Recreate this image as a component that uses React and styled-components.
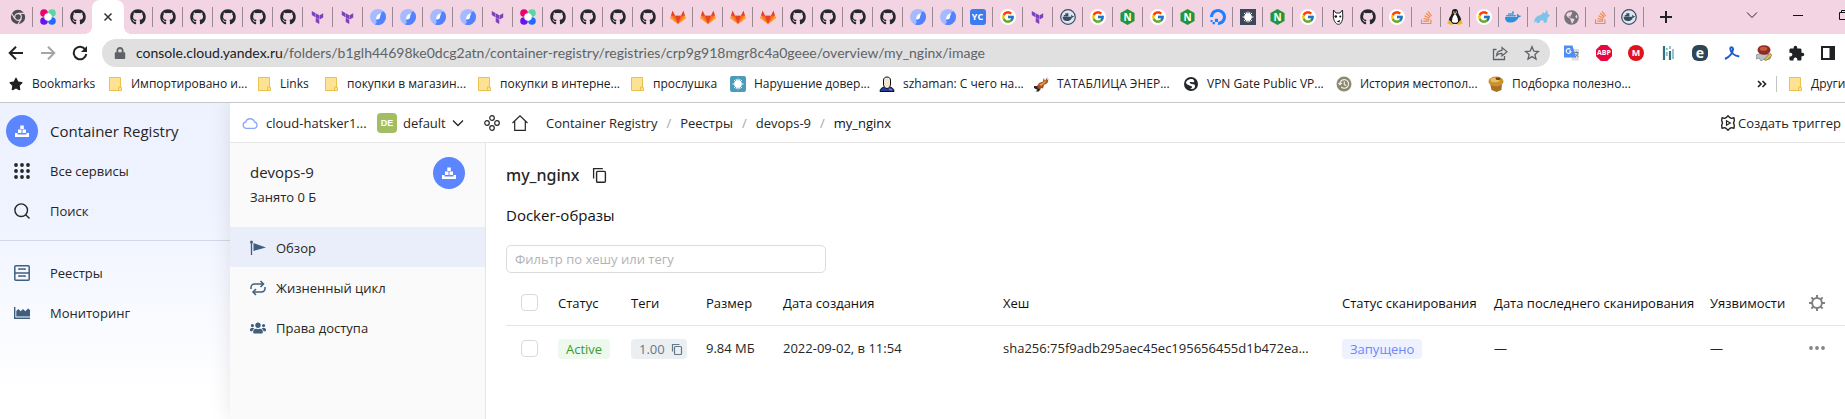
import React from "react";
import styled, { createGlobalStyle, css } from "styled-components";
import {
  FaGithub,
  FaDocker,
  FaStackOverflow,
  FaLock,
  FaStar,
  FaGlobeAmericas,
  FaUsers,
} from "react-icons/fa";
import { MdExtension } from "react-icons/md";
import { SiTerraform, SiDigitalocean } from "react-icons/si";
import { FcGoogle } from "react-icons/fc";

const GlobalStyle = createGlobalStyle`
  *, *::before, *::after { box-sizing: border-box; }
  body {
    margin: 0;
    overflow: hidden;
    background: #fff;
    color: #262626;
    font-family: "Open Sans", "Noto Sans", sans-serif;
    font-size: 13px;
    line-height: 20px;
  }
  button, input { font: inherit; color: inherit; }
  a { color: inherit; text-decoration: none; }
  svg { flex: none; }
`;

const Page = styled.div`
  display: flex;
  flex-direction: column;
  min-height: 100vh;
`;

const bareButton = css`
  display: flex;
  align-items: center;
  justify-content: center;
  flex: none;
  padding: 0;
  border: 0;
  background: none;
`;

/* ---------- browser frame ---------- */

const BrowserFrame = styled.header`
  border-bottom: 1px solid #c8c8c8;
  overflow: hidden;
`;

const TabStrip = styled.div`
  display: flex;
  align-items: stretch;
  height: 34px;
  padding-left: 3px;
  background: #f3d4e3;
`;

const Tab = styled.button`
  ${bareButton}
  width: ${(p) => (p.$narrow ? 29 : 30)}px;
  border-right: 1px solid transparent;
  background: ${(p) =>
    p.$divider ? "linear-gradient(#9c8892, #9c8892) right center / 1px 20px no-repeat border-box" : "none"};
`;

const ActiveTab = styled.button`
  ${bareButton}
  position: relative;
  width: 32px;
  margin: 0 -1px;
  border-radius: 8px 8px 0 0;
  background: #fff;
  &::before,
  &::after {
    content: "";
    position: absolute;
    bottom: 0;
    width: 8px;
    height: 8px;
  }
  &::before {
    right: 100%;
    background: radial-gradient(circle at 0 0, transparent 8px, #fff 8px);
  }
  &::after {
    left: 100%;
    background: radial-gradient(circle at 100% 0, transparent 8px, #fff 8px);
  }
`;

const NewTab = styled.button`
  ${bareButton}
  width: 28px;
  margin-left: 8px;
`;

const WindowControls = styled.div`
  display: flex;
  flex: none;
  width: 116px;
  height: 30px;
  margin-left: auto;
`;

const WindowButton = styled.button`
  ${bareButton}
  width: 46px;
`;

const Badge = styled.span`
  display: flex;
  align-items: center;
  justify-content: center;
  width: 16px;
  height: 16px;
  border-radius: ${(p) => p.$radius || 0}px;
  clip-path: ${(p) => p.$clip || "none"};
  background: ${(p) => p.$bg};
  color: #fff;
  font-size: ${(p) => p.$size || 8}px;
  font-weight: 700;
  line-height: 16px;
`;

const Toolbar = styled.div`
  display: flex;
  align-items: center;
  height: 38px;
  padding-right: 1px;
`;

const ToolButton = styled.button`
  ${bareButton}
  width: 32px;
  height: 28px;
`;

const AddressBar = styled.div`
  display: flex;
  align-items: center;
  flex: 1;
  min-width: 0;
  height: 28px;
  margin: 0 6px;
  padding: 0 2px 0 12px;
  border-radius: 14px;
  background: #e0e0e0;
`;

const Address = styled.div`
  flex: 1;
  min-width: 0;
  margin-left: 10px;
  overflow: hidden;
  white-space: nowrap;
  font-family: Lato, "Open Sans", sans-serif;
  font-size: 14px;
  color: #606367;
`;

const Host = styled.span`
  color: #202124;
`;

const BookmarkBar = styled.nav`
  display: flex;
  align-items: center;
  height: 30px;
  padding: 0 0 6px 8px;
  color: #202124;
  font-size: 12px;
`;

const Bookmark = styled.a`
  display: flex;
  align-items: center;
  flex: none;
  gap: 8px;
  width: ${(p) => p.$width}px;
  white-space: nowrap;
`;

const BookmarkIcon = styled.span`
  display: flex;
  justify-content: center;
  width: 16px;
`;

const MoreBookmarks = styled.div`
  display: flex;
  align-items: center;
  flex: none;
  width: 89px;
  margin-left: auto;
  overflow: hidden;
`;

const BarDivider = styled.span`
  flex: none;
  width: 1px;
  height: 16px;
  margin: 0 10px 0 8px;
  background: #c4c4c4;
`;

/* ---------- console ---------- */

const Console = styled.div`
  display: flex;
  flex: 1;
`;

const ServiceNav = styled.nav`
  flex: none;
  width: 230px;
  padding-top: 8px;
  background: linear-gradient(#eef2ff 0, #eff3ff 100px, #fff 290px);
`;

const ServiceLink = styled.a`
  display: flex;
  align-items: center;
  height: 40px;
  padding-left: 6px;
  gap: 12px;
  font-size: ${(p) => (p.$title ? 15 : 13)}px;
`;

const ServiceIcon = styled.span`
  display: flex;
  justify-content: center;
  width: 32px;
`;

const ServiceDivider = styled.hr`
  margin: 9px 0 12px;
  border: 0;
  border-top: 1px solid #d3d8e6;
`;

const Workspace = styled.div`
  position: relative;
  display: flex;
  flex-direction: column;
  flex: 1;
  min-width: 0;
  background: #fff;
  box-shadow: 0 0 20px rgba(0, 0, 0, 0.1);
  clip-path: inset(0 0 0 -40px);
`;

const TopBar = styled.div`
  display: flex;
  align-items: center;
  height: 40px;
  padding: 0 4px 0 12px;
  border-bottom: 1px solid #e5e5e5;
  white-space: nowrap;
`;

const CloudPicker = styled.button`
  ${bareButton}
  justify-content: flex-start;
  gap: 8px;
  width: 135px;
`;

const FolderPicker = styled.button`
  ${bareButton}
  justify-content: flex-start;
  gap: 6px;
  width: 101px;
`;

const FolderBadge = styled.span`
  width: 20px;
  height: 20px;
  border-radius: 4px;
  background: #a2be62;
  color: #fff;
  font-family: "Liberation Sans", sans-serif;
  font-size: 9px;
  font-weight: 700;
  line-height: 20px;
  text-align: center;
`;

const IconButton = styled.button`
  ${bareButton}
  width: 28px;
  height: 28px;
`;

const Crumbs = styled.ol`
  display: flex;
  margin: 0 0 0 12px;
  padding: 0;
  list-style: none;
`;

const Crumb = styled.li`
  color: ${(p) => (p.$current ? "#111" : "inherit")};
  &:not(:first-child)::before {
    content: "/";
    margin: 0 9px;
    color: #a5a5a5;
  }
`;

const TriggerButton = styled.button`
  ${bareButton}
  gap: 2px;
  margin-left: auto;
`;

const Body = styled.div`
  display: flex;
  flex: 1;
`;

const RegistryNav = styled.nav`
  flex: none;
  width: 256px;
  padding-top: 14px;
  border-right: 1px solid #e5e5e5;
  background: #fafafa;
`;

const RegistryHead = styled.div`
  display: flex;
  justify-content: space-between;
  align-items: flex-start;
  height: 70px;
  padding: 0 20px;
`;

const RegistryName = styled.h2`
  margin: 5px 0;
  font-size: 15px;
  font-weight: 400;
  line-height: 20px;
`;

const RegistryUsage = styled.p`
  margin: 0;
`;

const RegistryLink = styled.a`
  display: flex;
  align-items: center;
  gap: 10px;
  height: 40px;
  padding: 2px 0 0 20px;
  background: ${(p) => (p.$active ? "#eaeefb" : "none")};
`;

const Content = styled.main`
  flex: 1;
  min-width: 0;
  padding: 18px 0 0 20px;
`;

const TitleRow = styled.div`
  display: flex;
  align-items: center;
  gap: 6px;
`;

const Title = styled.h1`
  margin: 0;
  font-family: "Noto Sans", sans-serif;
  font-size: 16px;
  font-weight: 500;
  line-height: 24px;
`;

const Subtitle = styled.h2`
  margin: 16px 0 20px;
  font-size: 15px;
  font-weight: 400;
  line-height: 20px;
  color: #111;
`;

const Filter = styled.input`
  display: block;
  width: 320px;
  height: 28px;
  padding: 0 8px;
  border: 1px solid #dcdcdc;
  border-radius: 5px;
  background: #fff;
  &::placeholder { color: #b3b3b3; }
`;

const Table = styled.table`
  width: 100%;
  margin-top: 8px;
  border-collapse: collapse;
  table-layout: fixed;
`;

const Column = styled.col`
  width: ${(p) => (p.$width ? `${p.$width}px` : "auto")};
`;

const cell = css`
  padding: 0 0 0 10px;
  text-align: left;
  vertical-align: middle;
  white-space: nowrap;
`;

const HeadCell = styled.th`
  ${cell}
  height: 44px;
  border-bottom: 1px solid #e5e5e5;
  color: #111;
  font-weight: 400;
`;

const Cell = styled.td`
  ${cell}
  height: 46px;
`;

const Checkbox = styled.input`
  appearance: none;
  display: block;
  width: 17px;
  height: 17px;
  margin: 0 0 0 5px;
  border: 1px solid #d9d9d9;
  border-radius: 4px;
  background: #fff;
`;

const tones = {
  success: "background: #edf9ed; color: #3a9b32;",
  neutral: "background: #ebeff2; color: #64788a;",
  info: "background: #eef2ff; color: #6b87fa;",
};

const Label = styled.span`
  display: inline-flex;
  align-items: center;
  gap: 6px;
  height: 20px;
  padding: 0 ${(p) => (p.$copy ? 4 : 8)}px 0 8px;
  border-radius: 4px;
  vertical-align: middle;
  ${(p) => tones[p.$tone]}
`;

/* ---------- drawings ---------- */

const Svg = ({ size = 16, box = 16, children, ...rest }) => (
  <svg width={size} height={size} viewBox={`0 0 ${box} ${box}`} fill="none" aria-hidden="true" {...rest}>
    {children}
  </svg>
);

const Chrome = () => (
  <Svg>
    <circle cx="8" cy="8" r="7.2" fill="#4a4d51" />
    <circle cx="8" cy="8" r="3.3" fill="#4a4d51" stroke="#f3d4e3" strokeWidth="1.2" />
    <path d="M8 4.3h6.8M4.8 9.8 1.5 4.2M11.2 9.8 8 15.2" stroke="#f3d4e3" strokeWidth="1.2" />
  </Svg>
);

const Dots = () => (
  <Svg>
    <circle cx="4" cy="4" r="3.8" fill="#e8006f" />
    <circle cx="12" cy="4" r="3.8" fill="#5ad6a5" />
    <circle cx="4" cy="12" r="3.8" fill="#6414f0" />
    <circle cx="12" cy="12" r="3.8" fill="#1f6bff" />
    <circle cx="8" cy="8" r="3.8" fill="#fff" />
  </Svg>
);

const Planet = () => (
  <Svg>
    <circle cx="8" cy="8" r="8" fill="#a6bbff" />
    <path d="M13.500 2.200A8 8 0 0 1 4.500 15.200C8 14.500 6 12 6 10.500 6.500 6 10 4 13.500 2.200z" fill="#5282ff" />
    <path d="M11.500 4C8.500 4.500 6.200 6.500 6 10.300c1.600.6 3.400 0 3.900-1.500.4-1.600.3-3.200 1.600-4.800z" fill="#fff" />
  </Svg>
);

const Gitlab = () => (
  <Svg>
    <path d="M8 15 .3 9.300 2.500 1.800 5 6.700h6l2.500-4.900 2.200 7.500z" fill="#fc6d26" />
    <path d="M8 15 5 6.700h6z" fill="#e24329" />
    <path d="M2.500 1.800 5 6.700H1.200zM13.500 1.800 11 6.700h3.800z" fill="#e24329" />
    <path d="M.3 9.300 1.200 6.700 8 15zM15.700 9.300l-.9-2.600L8 15z" fill="#fca326" />
  </Svg>
);

const Google = () => (
  <Svg>
    <circle cx="8" cy="8" r="8" fill="#fff" />
    <FcGoogle x="1" y="1" size={14} />
  </Svg>
);

const Tux = () => (
  <Svg>
    <path d="M8 0c2.300 0 3.200 1.500 3.100 3.500 0 2.200 2.900 4 3.100 8L12 15H4l-2.200-3.500C2 8 4.900 6 4.900 3.500 4.800 1.500 5.700 0 8 0z" fill="#1c1c1c" />
    <path d="M8 5c1.500 1 3.200 4.500 3 7.500-1 1.800-5 1.800-6 0C4.800 9.500 6.500 6 8 5z" fill="#fff" />
    <path d="M6.300 4.300 8 3.500l1.700.8L8 5.800zM0 14.200 2.500 11l3.500 4-1.500 1zM16 14.200 13.500 11 10 15l1.500 1z" fill="#f2b521" />
    <path d="M6.200 2.500h1.200v1H6.200zM8.700 2.500h1.200v1H8.700z" fill="#fff" />
  </Svg>
);

const DockerRound = () => (
  <Svg>
    <circle cx="8" cy="8" r="7.300" fill="#dfe5ee" stroke="#384d61" strokeWidth="1.200" />
    <path d="M2.600 7.800h8.600c.2-1 .1-1.500-.2-2 .9.200 1.300.7 1.500 1.300.6-.1 1 0 1.400.3-.5.8-1 1-1.900 1-1 2.600-2.800 3.700-5.300 3.700-2.500 0-4-1.400-4.100-4.300z" fill="#384d61" />
    <path d="M3.800 6h4.600v1.500H3.800zM5.300 4.300h3.100V6H5.300z" fill="#384d61" />
  </Svg>
);

const Burst = ({ bg, color, radius }) => (
  <Svg>
    <rect width="16" height="16" rx={radius} fill={bg} />
    <circle cx="8" cy="8" r="3.800" fill={color} />
    <path d="M8 2.500v11M2.500 8h11M4 4l8 8M12 4l-8 8M6 3l4 10M10 3 6 13" stroke={color} strokeWidth=".9" />
  </Svg>
);

const Wolf = () => (
  <Svg>
    <path d="M3.500 1 6 4h4l2.500-3 .3 7c0 2.500-1.400 6.700-3.300 7.200C6.500 16 4 13 3.300 8z" fill="#fff" stroke="#222" />
    <circle cx="5.800" cy="7.500" r="1.300" fill="#111" />
    <circle cx="10.300" cy="7.500" r="1" fill="#111" />
    <path d="M6.500 12.500 10 11l-.5 2.500z" fill="#111" />
  </Svg>
);

const Rhino = () => (
  <Svg>
    <path d="M0 14c.3-4 2-7 5.500-7.500L8 5l1-2 1.500 1.500L13 .8l.8 4L16 6.500l-2.300 2.300-1.200 5H9.800l-.5-2.600-3 .3-.8 2.500H2.800L2.300 12z" fill="#7cc3ea" />
  </Svg>
);

const Close = () => (
  <Svg size={10} box={10}><path d="m1.500 1.500 7 7m0-7-7 7" stroke="#333" strokeWidth="1.500" /></Svg>
);
const Plus = () => (
  <Svg size={12} box={12}><path d="M6 0v12M0 6h12" stroke="#222" strokeWidth="2" /></Svg>
);
const Chevron = ({ width = 1 }) => (
  <Svg size={12} box={12}><path d="m1 3.500 5 5 5-5" stroke="#262626" strokeWidth={width} /></Svg>
);
const Minimise = () => (
  <Svg size={10} box={10}><path d="M0 5.500h10" stroke="#111" /></Svg>
);
const Restore = () => (
  <Svg size={10} box={10}><path d="M.5 2.500h7v7h-7zM2.500 2V.5h7v7H8" stroke="#111" /></Svg>
);
const Arrow = ({ forward }) => (
  <Svg transform={forward ? "scale(-1 1)" : undefined}>
    <path d="M15 8H2M8 1.700 1.700 8 8 14.300" stroke={forward ? "#a5a5a5" : "#222"} strokeWidth="2" />
  </Svg>
);
const Reload = () => (
  <Svg>
    <path d="M13.300 4.500A6.300 6.300 0 1 0 14.300 9" stroke="#222" strokeWidth="2" />
    <path d="M15 1v6H9z" fill="#222" />
  </Svg>
);
const Share = () => (
  <Svg>
    <path d="M4.500 4.500h-3v10h11V11" stroke="#5f6368" strokeWidth="1.300" />
    <path d="M4.500 10.500c.3-3.200 2-5 5.500-5.200V2.600l5 4.200-5 4.200V8.300c-2.500 0-4 .600-5.500 2.200z" stroke="#5f6368" strokeWidth="1.200" />
  </Svg>
);
const StarOutline = () => (
  <Svg>
    <path d="m8 1.800 1.800 4.300 4.600.4-3.500 3 1.100 4.600L8 11.600l-4 2.500 1.100-4.600-3.500-3 4.600-.4z" stroke="#5f6368" strokeWidth="1.300" />
  </Svg>
);
const Translate = () => (
  <Svg>
    <path d="M6 4h9v11.500H8z" fill="#dadce0" />
    <path d="M0 .5h8.500L12 12.500H0z" fill="#4f8df5" />
    <path d="M7 6a2.400 2.400 0 1 1-.7-1.700M7 6H5" stroke="#fff" strokeWidth="1.100" />
    <path d="M10.500 7.500h4M12.500 6.500v1M14 8c-.5 2-1.500 3-3 4M11.500 9l2.800 3" stroke="#5f7d95" />
  </Svg>
);
const Bars = () => (
  <Svg>
    <path d="M4 1v14M10 6v9" stroke="#2f7383" strokeWidth="2.200" />
    <path d="M6.800 3v2m0 2v4M13 4v10M10 1v3" stroke="#8fb9c2" strokeWidth="1.800" />
  </Svg>
);
const Ribbon = () => (
  <Svg>
    <path d="M1 14c4-2 7.500-5 8-9.500C9.200 2 6 1.500 6.300 4c.4 3.500 4 6.500 9 7.500" stroke="#1d5bd0" strokeWidth="2" />
  </Svg>
);
const Stamp = () => (
  <Svg>
    <path d="m0 10 3-1 2-1 3 1 7 0-1 5-4 1-2-1-3 2-2-3-3 1z" fill="#b9c2cc" stroke="#68727c" strokeWidth=".6" />
    <ellipse cx="8" cy="5" rx="6.500" ry="4.800" fill="#8f2c1f" />
    <ellipse cx="7.500" cy="3.800" rx="3.800" ry="2" fill="#c25a44" />
    <path d="m8 14.500 6-6 2 2-6 5z" fill="#efc04a" stroke="#7d5a17" strokeWidth=".6" />
  </Svg>
);
const SidePanel = () => (
  <Svg><path d="M2 2h12v12H2z" stroke="#202124" strokeWidth="2" /><path d="M9.500 2H15v12H9.500z" fill="#202124" /></Svg>
);
const Folder = () => (
  <Svg>
    <path d="M2.500 1.500h11v10h1v3h-12z" fill="#fde293" stroke="#e9c14b" />
    <path d="M11.500 14v-3h2.500" stroke="#e9c14b" />
  </Svg>
);
const Soldier = () => (
  <Svg>
    <path d="M1 15.500c0-3 2-4 5-4.500h4c3 .5 5 1.500 5 4.500z" fill="#1d3fae" stroke="#111" />
    <path d="M4.500 4c0-4 7-4 7 0v4c0 3-2 4.500-3.500 4.500S4.500 11 4.500 8z" fill="#f3e6d6" stroke="#111" />
    <path d="m10 13 3 1" stroke="#e2622d" strokeWidth="1.500" />
  </Svg>
);
const Dragon = () => (
  <Svg>
    <path d="M1 10.500 4 10l2-3 4-1.500L10.500 2l1.500 2.500L14.500 1 13.800 4l1.700-1-1 4-3.500 2-1 3.500-2-.5-1 2.500-1.500-1.500z" fill="#a3512a" />
    <path d="m6 8.500 3.500-1.500L12 4.500l1.500 0L11.500 7.500 8 10z" fill="#e0a23a" />
    <path d="m1 10 4 .5-1 1.500 3 1-1 2.500H2.500l2-1.500L1 12z" fill="#222" />
  </Svg>
);
const Globe = () => (
  <Svg>
    <circle cx="8" cy="8" r="7" fill="#24282d" />
    <path d="M3 6c2-3 4-3 6-3 1 0 3 2 2 3-2 1-5-1-4 1s5 0 5 3-2 3-5 3c2-1 3-2 1-3S3 9 3 6z" fill="#fff" />
  </Svg>
);
const History = () => (
  <Svg>
    <circle cx="8" cy="8" r="7.500" fill="#8d8872" />
    <path d="M4 8a4.300 4.300 0 1 1 1.300 3M2.500 7 4 8.700 5.700 7M8.300 5.500v3l2 1.200" stroke="#f1efe6" strokeWidth="1.200" />
  </Svg>
);
const Muffin = () => (
  <Svg>
    <path d="m2 7 1.500 7 5 2 5-2L14 7z" fill="#a87022" />
    <ellipse cx="8" cy="5.500" rx="7.500" ry="5" fill="#c9922f" />
    <ellipse cx="7" cy="4" rx="4.500" ry="2.300" fill="#e8bf63" />
    <ellipse cx="10" cy="2.800" rx="2.500" ry="1.200" fill="#7a3a1c" />
  </Svg>
);
const DoubleChevron = () => (
  <Svg size={12} box={12}><path d="m2 3 3 3-3 3M6.500 3l3 3-3 3" stroke="#222" strokeWidth="1.600" /></Svg>
);

const RegistryLogo = () => (
  <Svg size={32} box={32}>
    <circle cx="16" cy="16" r="16" fill="#5c86ff" />
    <path d="M9 18h2.500v1.500h9V18H23v4H9zM12 14.500h3.500V18H12zM16.500 14.500H20V18h-3.500zM14.300 10.500h3.500V14h-3.500z" fill="#fff" />
  </Svg>
);
const Apps = () => (
  <Svg>
    {[2, 8, 14].map((y) => [2, 8, 14].map((x) => <circle key={`${x}-${y}`} cx={x} cy={y} r="1.900" fill="#262626" />))}
  </Svg>
);
const SearchIcon = () => (
  <Svg><circle cx="7.200" cy="7.200" r="6.300" stroke="#262626" strokeWidth="1.400" /><path d="m11.700 11.700 3.800 3.800" stroke="#262626" strokeWidth="1.400" /></Svg>
);
const Cabinet = () => (
  <Svg>
    <rect x=".8" y=".8" width="14.400" height="14.400" rx="1" stroke="#3f5f7f" strokeWidth="1.500" />
    <path d="M1 8h14M5 5V4h6v1M5 12v-1h6v1" stroke="#3f5f7f" strokeWidth="1.400" />
  </Svg>
);
const ChartIcon = () => (
  <Svg><path d="M.7 2v11.300H16" stroke="#3f5f7f" strokeWidth="1.400" /><path d="M2.300 11.500V6l2-2 2.400 2.300L9 4l2.300 2.300L14 3.500l2 1.500v6.500z" fill="#3f5f7f" /></Svg>
);
const Flag = () => (
  <Svg><circle cx="1.500" cy="2" r="1.500" fill="#3f5f7f" /><path d="M1.500 2v13" stroke="#3f5f7f" strokeWidth="1.300" /><path d="m3.500 3 12.500 4.500-12.500 3.500z" fill="#3f5f7f" /></Svg>
);
const Cycle = () => (
  <Svg>
    <path d="M1 9V7.500A3.500 3.500 0 0 1 4.500 4H13M15 7v1.500A3.500 3.500 0 0 1 11.500 12H3.500" stroke="#3f5f7f" strokeWidth="1.500" />
    <path d="m10.500 1 3 3-3 3M6 9l-3 3 3 3" stroke="#3f5f7f" strokeWidth="1.500" />
  </Svg>
);
const Cloud = () => (
  <Svg><path d="M4 13.300a3.200 3.200 0 0 1-.3-6.300A4.600 4.600 0 0 1 12.500 7a3.200 3.200 0 0 1-.2 6.300z" stroke="#8aa6ff" strokeWidth="1.300" /></Svg>
);
const Circles = () => (
  <Svg>
    {[[8, 3], [3, 8], [13, 8], [8, 13]].map(([x, y]) => <circle key={`${x}-${y}`} cx={x} cy={y} r="2.300" stroke="#262626" strokeWidth="1.200" />)}
  </Svg>
);
const Home = () => (
  <Svg><path d="M.5 8 8 .8 15.500 8M2.700 6.500v8.800h10.600V6.500" stroke="#262626" strokeWidth="1.200" /></Svg>
);
const TriggerIcon = () => (
  <Svg>
    <path d="M6 2.700 8 .8l2 1.900 1.300.7 2.700-.6.300 2.900L13.500 8l.8 2.300-.3 2.900-2.700-.6-1.300.7-2 1.900-2-1.900-1.300-.7-2.700.6-.3-2.900L2.500 8l-.8-2.300L2 2.800l2.700.6z" stroke="#262626" strokeWidth="1.400" strokeLinejoin="round" />
    <path d="M6.500 5.700v4.600L10.300 8z" stroke="#262626" strokeWidth="1.200" />
  </Svg>
);
const Copy = () => (
  <Svg><path d="M1.600 11.500V1.600h9.200" stroke="currentColor" strokeWidth="1.300" /><rect x="4.600" y="4.400" width="8.800" height="10.800" rx="1" stroke="currentColor" strokeWidth="1.400" /></Svg>
);
const SmallCopy = () => (
  <Svg size={12} box={12}><path d="M1.500 8.500v-7h7" stroke="currentColor" strokeWidth="1.200" /><rect x="3.500" y="3.500" width="7" height="8" rx="1" stroke="currentColor" strokeWidth="1.200" /></Svg>
);
const Gear = () => (
  <Svg>
    <circle cx="8" cy="8" r="4.900" stroke="#808080" strokeWidth="2" />
    {[0, 45, 90, 135, 180, 225, 270, 315].map((a) => <path key={a} d="M8 0v3" stroke="#808080" strokeWidth="2" transform={`rotate(${a} 8 8)`} />)}
  </Svg>
);
const Ellipsis = () => (
  <Svg>{[2, 8, 14].map((x) => <circle key={x} cx={x} cy="8" r="1.900" fill="#858585" />)}</Svg>
);

/* ---------- data ---------- */

const favicons = {
  chrome: <Chrome />,
  dots: <Dots />,
  github: <FaGithub size={16} color="#24292f" />,
  terraform: <SiTerraform size={13} color="#7b42bc" />,
  planet: <Planet />,
  gitlab: <Gitlab />,
  yc: <Badge $bg="#3e7bee" $radius={3} $size={9}>YC</Badge>,
  google: <Google />,
  dockerRound: <DockerRound />,
  nginx: <Badge $bg="#269539" $size={10} $clip="polygon(50% 0, 94% 25%, 94% 75%, 50% 100%, 6% 75%, 6% 25%)">N</Badge>,
  digitalOcean: <SiDigitalocean size={16} color="#1f80ff" />,
  burst: <Burst bg="#3f4659" color="#fff" radius={0} />,
  wolf: <Wolf />,
  stack: <FaStackOverflow size={15} color="#ee8a4a" />,
  linux: <Tux />,
  docker: <FaDocker size={16} color="#2b91d9" />,
  rhino: <Rhino />,
  globe: <FaGlobeAmericas size={15} color="#75747a" />,
};

const leadingTabs = ["chrome", "dots", "github"];

const wideTabs = [
  "github", "github", "github", "github", "github", "github",
  "terraform", "terraform", "planet", "planet", "planet", "planet", "terraform", "dots",
  "github", "github", "github", "github", "gitlab", "gitlab", "gitlab", "gitlab",
  "github", "github", "github", "github", "planet", "planet", "yc", "google", "terraform",
  "dockerRound", "google", "nginx", "google", "nginx", "digitalOcean", "burst", "nginx",
  "google", "wolf", "github",
];

const narrowTabs = ["google", "stack", "linux", "google", "docker", "rhino", "globe", "stack", "dockerRound"];

const extensions = [
  ["Переводчик", <Translate />],
  ["Блокировщик", <Badge $bg="#e8063e" $size={7} $clip="polygon(30% 0, 70% 0, 100% 30%, 100% 70%, 70% 100%, 30% 100%, 0 70%, 0 30%)">ABP</Badge>],
  ["Mega", <Badge $bg="#e0131a" $size={9} $radius={8}>M</Badge>],
  ["Полосы", <Bars />],
  ["Экран", <Badge $bg="#2d4556" $size={14} $radius={6}>e</Badge>],
  ["Лента", <Ribbon />],
  ["Печать", <Stamp />],
  ["Расширения", <MdExtension size={17} color="#202124" />],
  ["Боковая панель", <SidePanel />],
];

const bookmarks = [
  ["Bookmarks", <FaStar size={14} />, 99],
  ["Импортировано и...", <Folder />, 149],
  ["Links", <Folder />, 67],
  ["покупки в магазин...", <Folder />, 153],
  ["покупки в интерне...", <Folder />, 153],
  ["прослушка", <Folder />, 101],
  ["Нарушение довер...", <Burst bg="#4a9cb8" color="#fff" radius={2} />, 149],
  ["szhaman: С чего на...", <Soldier />, 154],
  ["ТАТАБЛИЦА ЭНЕР...", <Dragon />, 150],
  ["VPN Gate Public VP...", <Globe />, 153],
  ["История местопол...", <History />, 152],
  ["Подборка полезно...", <Muffin />, 140],
];

const columns = [42, 73, 75, 77, 220, null, 152, 216, 93, 52];

export default function App() {
  return (
    <Page>
      <GlobalStyle />
      <BrowserFrame>
        <TabStrip>
          {leadingTabs.map((name, i) => (
            <Tab key={i} aria-label={name} $divider={i < 2}>{favicons[name]}</Tab>
          ))}
          <ActiveTab aria-label="Закрыть вкладку"><Close /></ActiveTab>
          {wideTabs.map((name, i) => (
            <Tab key={i} aria-label={name} $divider>{favicons[name]}</Tab>
          ))}
          {narrowTabs.map((name, i) => (
            <Tab key={i} aria-label={name} $divider $narrow>{favicons[name]}</Tab>
          ))}
          <NewTab aria-label="Новая вкладка"><Plus /></NewTab>
          <WindowControls>
            <WindowButton aria-label="Поиск вкладок"><Chevron /></WindowButton>
            <WindowButton aria-label="Свернуть"><Minimise /></WindowButton>
            <WindowButton aria-label="Развернуть"><Restore /></WindowButton>
          </WindowControls>
        </TabStrip>

        <Toolbar>
          <ToolButton aria-label="Назад"><Arrow /></ToolButton>
          <ToolButton aria-label="Вперёд"><Arrow forward /></ToolButton>
          <ToolButton aria-label="Обновить"><Reload /></ToolButton>
          <AddressBar>
            <FaLock size={12} color="#5f6368" />
            <Address>
              <Host>console.cloud.yandex.ru</Host>
              /folders/b1glh44698ke0dcg2atn/container-registry/registries/crp9g918mgr8c4a0geee/overview/my_nginx/image
            </Address>
            <ToolButton aria-label="Поделиться"><Share /></ToolButton>
            <ToolButton aria-label="В закладки"><StarOutline /></ToolButton>
          </AddressBar>
          {extensions.map(([name, icon]) => (
            <ToolButton key={name} aria-label={name}>{icon}</ToolButton>
          ))}
        </Toolbar>

        <BookmarkBar>
          {bookmarks.map(([name, icon, width]) => (
            <Bookmark key={name} href="#" $width={width}><BookmarkIcon>{icon}</BookmarkIcon>{name}</Bookmark>
          ))}
          <MoreBookmarks>
            <DoubleChevron />
            <BarDivider />
            <Bookmark href="#" $width={90}><BookmarkIcon><Folder /></BookmarkIcon>Други</Bookmark>
          </MoreBookmarks>
        </BookmarkBar>
      </BrowserFrame>

      <Console>
        <ServiceNav>
          <ServiceLink href="#" $title><ServiceIcon><RegistryLogo /></ServiceIcon>Container Registry</ServiceLink>
          <ServiceLink href="#"><ServiceIcon><Apps /></ServiceIcon>Все сервисы</ServiceLink>
          <ServiceLink href="#"><ServiceIcon><SearchIcon /></ServiceIcon>Поиск</ServiceLink>
          <ServiceDivider />
          <ServiceLink href="#"><ServiceIcon><Cabinet /></ServiceIcon>Реестры</ServiceLink>
          <ServiceLink href="#"><ServiceIcon><ChartIcon /></ServiceIcon>Мониторинг</ServiceLink>
        </ServiceNav>

        <Workspace>
          <TopBar>
            <CloudPicker><Cloud />cloud-hatsker1...</CloudPicker>
            <FolderPicker><FolderBadge>DE</FolderBadge>default<Chevron width={1.3} /></FolderPicker>
            <IconButton aria-label="Ресурсы"><Circles /></IconButton>
            <IconButton aria-label="Домой"><Home /></IconButton>
            <Crumbs>
              <Crumb><a href="#">Container Registry</a></Crumb>
              <Crumb><a href="#">Реестры</a></Crumb>
              <Crumb><a href="#">devops-9</a></Crumb>
              <Crumb $current>my_nginx</Crumb>
            </Crumbs>
            <TriggerButton><TriggerIcon />Создать триггер</TriggerButton>
          </TopBar>

          <Body>
            <RegistryNav>
              <RegistryHead>
                <div>
                  <RegistryName>devops-9</RegistryName>
                  <RegistryUsage>Занято 0 Б</RegistryUsage>
                </div>
                <RegistryLogo />
              </RegistryHead>
              <RegistryLink href="#" $active><Flag />Обзор</RegistryLink>
              <RegistryLink href="#"><Cycle />Жизненный цикл</RegistryLink>
              <RegistryLink href="#"><FaUsers size={16} color="#3f5f7f" />Права доступа</RegistryLink>
            </RegistryNav>

            <Content>
              <TitleRow>
                <Title>my_nginx</Title>
                <IconButton aria-label="Скопировать имя"><Copy /></IconButton>
              </TitleRow>
              <Subtitle>Docker-образы</Subtitle>
              <Filter aria-label="Фильтр по хешу или тегу" placeholder="Фильтр по хешу или тегу" />
              <Table>
                <colgroup>{columns.map((w, i) => <Column key={i} $width={w} />)}</colgroup>
                <thead>
                  <tr>
                    <HeadCell><Checkbox type="checkbox" aria-label="Выбрать все" /></HeadCell>
                    <HeadCell>Статус</HeadCell>
                    <HeadCell>Теги</HeadCell>
                    <HeadCell>Размер</HeadCell>
                    <HeadCell>Дата создания</HeadCell>
                    <HeadCell>Хеш</HeadCell>
                    <HeadCell>Статус сканирования</HeadCell>
                    <HeadCell>Дата последнего сканирования</HeadCell>
                    <HeadCell>Уязвимости</HeadCell>
                    <HeadCell><IconButton aria-label="Настройки таблицы"><Gear /></IconButton></HeadCell>
                  </tr>
                </thead>
                <tbody>
                  <tr>
                    <Cell><Checkbox type="checkbox" aria-label="Выбрать образ" /></Cell>
                    <Cell><Label $tone="success">Active</Label></Cell>
                    <Cell><Label $tone="neutral" $copy>1.00<SmallCopy /></Label></Cell>
                    <Cell>9.84 МБ</Cell>
                    <Cell>2022-09-02, в 11:54</Cell>
                    <Cell>sha256:75f9adb295aec45ec195656455d1b472ea...</Cell>
                    <Cell><Label $tone="info">Запущено</Label></Cell>
                    <Cell>—</Cell>
                    <Cell>—</Cell>
                    <Cell><IconButton aria-label="Действия"><Ellipsis /></IconButton></Cell>
                  </tr>
                </tbody>
              </Table>
            </Content>
          </Body>
        </Workspace>
      </Console>
    </Page>
  );
}
